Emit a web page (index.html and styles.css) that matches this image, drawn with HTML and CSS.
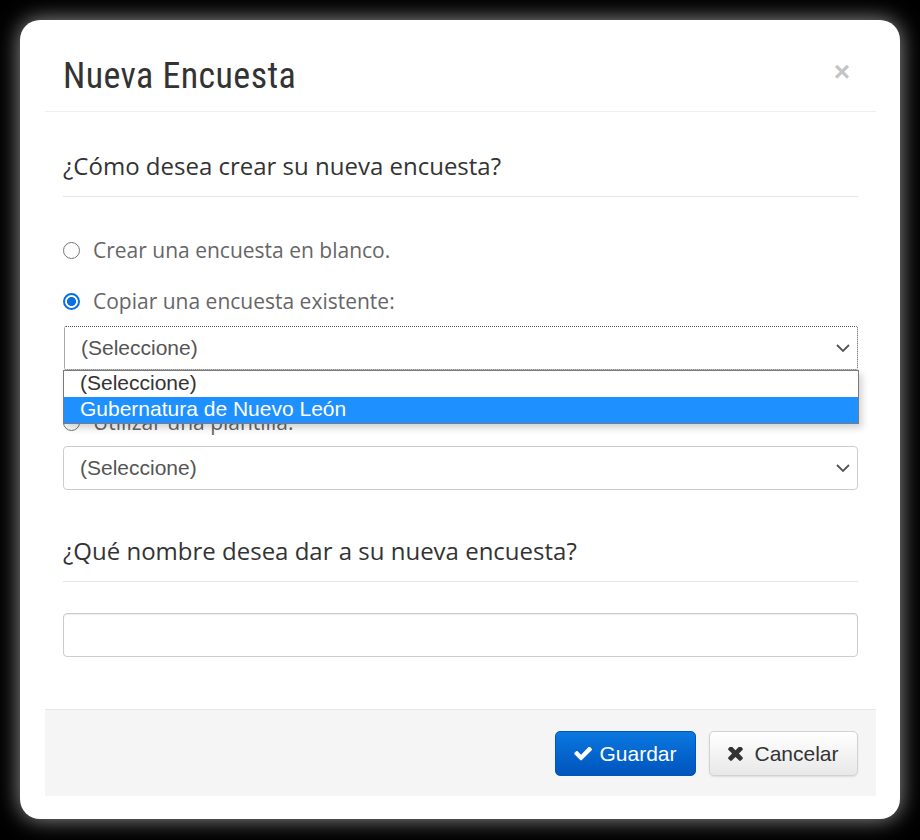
FILE: index.html
```html
<!DOCTYPE html>
<html lang="es">
<head>
<meta charset="utf-8">
<title>Nueva Encuesta</title>
<link rel="stylesheet" href="styles.css">
</head>
<body>
<div class="modal">
  <div class="modal-inner">
    <div class="modal-header">
      <h1 class="modal-title">Nueva Encuesta</h1>
      <span class="close">×</span>
    </div>
    <div class="modal-body">
      <h2 class="section-title first">¿Cómo desea crear su nueva encuesta?</h2>
      <label class="radio-row row-blank"><span class="radio"></span><span>Crear una encuesta en blanco.</span></label>
      <label class="radio-row row-copy"><span class="radio checked"></span><span>Copiar una encuesta existente:</span></label>
      <div class="select-wrap">
        <div class="select focused"><span>(Seleccione)</span><svg class="chev" viewBox="0 0 14 8" width="14" height="8"><path d="M1 1l6 6 6-6" fill="none" stroke="#555" stroke-width="1.8"/></svg></div>
        <ul class="dropdown">
          <li>(Seleccione)</li>
          <li class="hl">Gubernatura de Nuevo León</li>
        </ul>
      </div>
      <label class="radio-row row-tpl"><span class="radio"></span><span>Utilizar una plantilla:</span></label>
      <div class="select"><span>(Seleccione)</span><svg class="chev" viewBox="0 0 14 8" width="14" height="8"><path d="M1 1l6 6 6-6" fill="none" stroke="#555" stroke-width="1.8"/></svg></div>
      <h2 class="section-title second">¿Qué nombre desea dar a su nueva encuesta?</h2>
      <input class="text-input" type="text">
    </div>
    <div class="modal-footer">
      <button class="btn btn-primary"><svg class="ico" viewBox="100 400 1572 1128" width="18" height="14"><path fill="#fff" d="M1671 566q0 40-28 68l-724 724-136 136q-28 28-68 28t-68-28l-136-136-362-362q-28-28-28-68t28-68l136-136q28-28 68-28t68 28l294 295 656-657q28-28 68-28t68 28l136 136q28 28 28 68z"/></svg>Guardar</button>
      <button class="btn btn-default"><svg class="ico" viewBox="110 430 1190 1128" width="15" height="14"><path fill="#333" d="M1298 1322q0 40-28 68l-136 136q-28 28-68 28t-68-28l-294-294-294 294q-28 28-68 28t-68-28l-136-136q-28-28-28-68t28-68l294-294-294-294q-28-28-28-68t28-68l136-136q28-28 68-28t68 28l294 294 294-294q28-28 68-28t68 28l136 136q28 28 28 68t-28 68l-294 294 294 294q28 28 28 68z"/></svg>Cancelar</button>
    </div>
  </div>
</div>
</body>
</html>
```
FILE: styles.css
```css
* { box-sizing: border-box; }
html, body { margin: 0; padding: 0; }
body {
  background: #000;
  width: 920px;
  height: 840px;
  padding: 20px;
  overflow: hidden;
}
.modal {
  width: 880px;
  height: 799px;
  background: #fff;
  border-radius: 20px;
  box-shadow: 0 0 22px rgba(255,255,255,0.6);
  padding: 0 24px 23px 25px;
  display: flex;
  flex-direction: column;
}
.modal-inner {
  flex: 1;
  display: flex;
  flex-direction: column;
}
.modal-header {
  position: relative;
  padding: 36px 18px 15px;
  border-bottom: 1px solid #eeeeee;
}
.modal-title {
  margin: 0;
  font-family: "Roboto Condensed", Roboto, sans-serif;
  font-stretch: condensed;
  font-weight: 400;
  font-size: 36px;
  letter-spacing: 0.4px;
  line-height: 40px;
  color: #333;
}
.close {
  position: absolute;
  right: 26px;
  top: 38px;
  font-family: "Liberation Sans", Arial, sans-serif;
  font-weight: bold;
  font-size: 28px;
  line-height: 1;
  color: #c4c4c4;
}
.modal-body {
  flex: 1;
  padding: 0 18px;
  font-family: "Open Sans", sans-serif;
}
.section-title {
  margin: 0;
  font-family: "Open Sans", sans-serif;
  font-weight: 400;
  font-size: 24px;
  line-height: 32px;
  color: #333;
  padding-bottom: 14px;
  border-bottom: 1px solid #e5e5e5;
}
.section-title.first { margin-top: 38px; }
.section-title.second { margin-top: 45px; }
.radio-row {
  display: flex;
  align-items: center;
  gap: 13px;
  font-size: 21px;
  line-height: 28px;
  color: #666;
}
.row-blank { margin-top: 39px; }
.row-copy { margin-top: 23px; }
.row-tpl { margin-top: 38px; }
.radio {
  width: 17px;
  height: 17px;
  border-radius: 50%;
  border: 1px solid #767676;
  background: #fff;
  flex: none;
}
.radio.checked {
  border: 2px solid #0b6fe0;
  background: radial-gradient(circle, #0b6fe0 0 4.2px, #fff 4.8px);
}
.select-wrap {
  position: relative;
  margin-top: 11px;
}
.row-tpl + .select { margin-top: 10px; }
.select {
  height: 44px;
  border: 1px solid #ccc;
  border-radius: 4px;
  display: flex;
  align-items: center;
  justify-content: space-between;
  padding: 0 7px 0 16px;
  font-family: "Liberation Sans", Arial, sans-serif;
  font-size: 21px;
  color: #555;
}
.select.focused {
  border: 1px dotted #555;
  border-radius: 2px;
  margin-left: 1px;
}
.chev { display: block; }
.dropdown {
  position: absolute;
  left: 0;
  right: -1px;
  top: 44px;
  margin: 0;
  padding: 0;
  list-style: none;
  background: #fff;
  border: 1px solid #7a7a7a;
  box-shadow: 3px 4px 7px rgba(0,0,0,0.18);
  font-family: "Liberation Sans", Arial, sans-serif;
  font-size: 21px;
  color: #333;
  z-index: 5;
}
.dropdown li {
  height: 26px;
  line-height: 24px;
  padding-left: 16px;
}
.dropdown li.hl {
  background: #1e90ff;
  color: #fff;
}
.text-input {
  display: block;
  width: 100%;
  height: 44px;
  margin-top: 31px;
  border: 1px solid #ccc;
  border-radius: 4px;
  box-shadow: inset 0 1px 1px rgba(0,0,0,0.075);
  background: #fff;
  outline: none;
}
.modal-footer {
  border-top: 1px solid #e5e5e5;
  background: #f5f5f5;
  padding: 21px 18px 20px;
  display: flex;
  justify-content: flex-end;
  gap: 13px;
}
.btn {
  height: 45px;
  display: flex;
  align-items: center;
  font-family: "Liberation Sans", Arial, sans-serif;
  font-size: 21px;
  border-radius: 5px;
  cursor: pointer;
}
.btn .ico { display: block; }
.btn-primary {
  width: 141px;
  justify-content: center;
  gap: 7px;
  color: #fff;
  border: 1px solid #0055b8;
  background: linear-gradient(#0a78e0, #0054bd);
}
.btn-default {
  width: 149px;
  justify-content: center;
  gap: 11px;
  color: #333;
  border: 1px solid #d2d2d2;
  background: linear-gradient(#ffffff, #e8e8e8);
  box-shadow: 0 1px 2px rgba(0,0,0,0.1);
}
```
